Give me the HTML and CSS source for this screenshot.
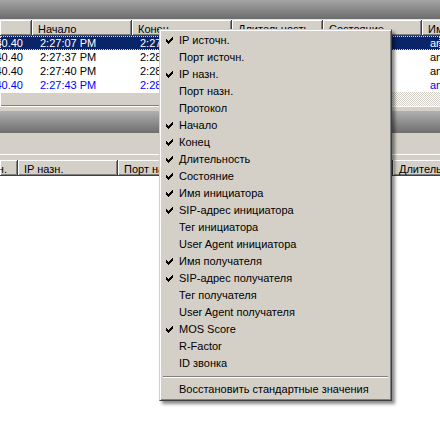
FILE: index.html
```html
<!DOCTYPE html>
<html>
<head>
<meta charset="utf-8">
<link rel="stylesheet" href="styles.css">
</head>
<body>
<div class="app">
  <div class="titlebar top"></div>
  <div class="header">
    <div class="hc w32"></div>
    <div class="hc w100">Начало</div>
    <div class="hc w100">Конец</div>
    <div class="hc w91">Длительность</div>
    <div class="hc w99">Состояние</div>
    <div class="hc w100">Имя инициатора</div>
  </div>
  <div class="rows">
    <div class="row sel">
      <div class="cell w32 clipl"><span>10.0.40.40</span></div>
      <div class="cell w100">2:27:07 PM</div>
      <div class="cell w100">2:27:52 PM</div>
      <div class="cell w91">00:00:45</div>
      <div class="cell w99">Завершён</div>
      <div class="cell w100">anonymous</div>
    </div>
    <div class="row">
      <div class="cell w32 clipl"><span>10.0.40.40</span></div>
      <div class="cell w100">2:27:37 PM</div>
      <div class="cell w100">2:28:02 PM</div>
      <div class="cell w91">00:00:25</div>
      <div class="cell w99">Завершён</div>
      <div class="cell w100">anonymous</div>
    </div>
    <div class="row">
      <div class="cell w32 clipl"><span>10.0.40.40</span></div>
      <div class="cell w100">2:27:40 PM</div>
      <div class="cell w100">2:28:10 PM</div>
      <div class="cell w91">00:00:30</div>
      <div class="cell w99">Завершён</div>
      <div class="cell w100">anonymous</div>
    </div>
    <div class="row blue">
      <div class="cell w32 clipl"><span>10.0.40.40</span></div>
      <div class="cell w100">2:27:43 PM</div>
      <div class="cell w100">2:28:15 PM</div>
      <div class="cell w91">00:00:32</div>
      <div class="cell w99">Активен</div>
      <div class="cell w100">anonymous</div>
    </div>
  </div>
  <div class="hscroll">
    <div class="thumb"></div>
    <div class="track"></div>
  </div>
  <div class="gap"></div>
  <div class="titlebar mid"></div>
  <div class="panel"></div>
  <div class="splitline"></div>
  <div class="panel2"></div>
  <div class="header lower">
    <div class="hc w18 clipl"><span>источн.</span></div>
    <div class="hc w100">IP назн.</div>
    <div class="hc w100">Порт назн.</div>
    <div class="hc w100">Протокол</div>
    <div class="hc w75">Начало</div>
    <div class="hc w100">Длительность</div>
  </div>
  <div class="list"></div>
</div>

<div class="menu">
  <div class="item"><span class="chk"><svg width="7" height="7" viewBox="0 0 7 7"><path d="M6 0h1v1h-1zM5 1h2v1h-2zM0 2h1v1h-1zM4 2h3v1h-3zM0 3h2v1h-2zM3 3h3v1h-3zM0 4h5v1h-5zM1 5h3v1h-3zM2 6h1v1h-1z"/></svg></span>IP источн.</div>
  <div class="item"><span class="chk"></span>Порт источн.</div>
  <div class="item"><span class="chk"><svg width="7" height="7" viewBox="0 0 7 7"><path d="M6 0h1v1h-1zM5 1h2v1h-2zM0 2h1v1h-1zM4 2h3v1h-3zM0 3h2v1h-2zM3 3h3v1h-3zM0 4h5v1h-5zM1 5h3v1h-3zM2 6h1v1h-1z"/></svg></span>IP назн.</div>
  <div class="item"><span class="chk"></span>Порт назн.</div>
  <div class="item"><span class="chk"></span>Протокол</div>
  <div class="item"><span class="chk"><svg width="7" height="7" viewBox="0 0 7 7"><path d="M6 0h1v1h-1zM5 1h2v1h-2zM0 2h1v1h-1zM4 2h3v1h-3zM0 3h2v1h-2zM3 3h3v1h-3zM0 4h5v1h-5zM1 5h3v1h-3zM2 6h1v1h-1z"/></svg></span>Начало</div>
  <div class="item"><span class="chk"><svg width="7" height="7" viewBox="0 0 7 7"><path d="M6 0h1v1h-1zM5 1h2v1h-2zM0 2h1v1h-1zM4 2h3v1h-3zM0 3h2v1h-2zM3 3h3v1h-3zM0 4h5v1h-5zM1 5h3v1h-3zM2 6h1v1h-1z"/></svg></span>Конец</div>
  <div class="item"><span class="chk"><svg width="7" height="7" viewBox="0 0 7 7"><path d="M6 0h1v1h-1zM5 1h2v1h-2zM0 2h1v1h-1zM4 2h3v1h-3zM0 3h2v1h-2zM3 3h3v1h-3zM0 4h5v1h-5zM1 5h3v1h-3zM2 6h1v1h-1z"/></svg></span>Длительность</div>
  <div class="item"><span class="chk"><svg width="7" height="7" viewBox="0 0 7 7"><path d="M6 0h1v1h-1zM5 1h2v1h-2zM0 2h1v1h-1zM4 2h3v1h-3zM0 3h2v1h-2zM3 3h3v1h-3zM0 4h5v1h-5zM1 5h3v1h-3zM2 6h1v1h-1z"/></svg></span>Состояние</div>
  <div class="item"><span class="chk"><svg width="7" height="7" viewBox="0 0 7 7"><path d="M6 0h1v1h-1zM5 1h2v1h-2zM0 2h1v1h-1zM4 2h3v1h-3zM0 3h2v1h-2zM3 3h3v1h-3zM0 4h5v1h-5zM1 5h3v1h-3zM2 6h1v1h-1z"/></svg></span>Имя инициатора</div>
  <div class="item"><span class="chk"><svg width="7" height="7" viewBox="0 0 7 7"><path d="M6 0h1v1h-1zM5 1h2v1h-2zM0 2h1v1h-1zM4 2h3v1h-3zM0 3h2v1h-2zM3 3h3v1h-3zM0 4h5v1h-5zM1 5h3v1h-3zM2 6h1v1h-1z"/></svg></span>SIP-адрес инициатора</div>
  <div class="item"><span class="chk"></span>Тег инициатора</div>
  <div class="item"><span class="chk"></span>User Agent инициатора</div>
  <div class="item"><span class="chk"><svg width="7" height="7" viewBox="0 0 7 7"><path d="M6 0h1v1h-1zM5 1h2v1h-2zM0 2h1v1h-1zM4 2h3v1h-3zM0 3h2v1h-2zM3 3h3v1h-3zM0 4h5v1h-5zM1 5h3v1h-3zM2 6h1v1h-1z"/></svg></span>Имя получателя</div>
  <div class="item"><span class="chk"><svg width="7" height="7" viewBox="0 0 7 7"><path d="M6 0h1v1h-1zM5 1h2v1h-2zM0 2h1v1h-1zM4 2h3v1h-3zM0 3h2v1h-2zM3 3h3v1h-3zM0 4h5v1h-5zM1 5h3v1h-3zM2 6h1v1h-1z"/></svg></span>SIP-адрес получателя</div>
  <div class="item"><span class="chk"></span>Тег получателя</div>
  <div class="item"><span class="chk"></span>User Agent получателя</div>
  <div class="item"><span class="chk"><svg width="7" height="7" viewBox="0 0 7 7"><path d="M6 0h1v1h-1zM5 1h2v1h-2zM0 2h1v1h-1zM4 2h3v1h-3zM0 3h2v1h-2zM3 3h3v1h-3zM0 4h5v1h-5zM1 5h3v1h-3zM2 6h1v1h-1z"/></svg></span>MOS Score</div>
  <div class="item"><span class="chk"></span>R-Factor</div>
  <div class="item"><span class="chk"></span>ID звонка</div>
  <div class="sep"></div>
  <div class="item"><span class="chk"></span>Восстановить стандартные значения</div>
</div>
</body>
</html>
```
FILE: styles.css
```css
html, body {
  margin: 0;
  padding: 0;
}
body {
  font-family: "Liberation Sans", Arial, sans-serif;
  font-size: 11px;
  color: #000;
  background: #fff;
  overflow: hidden;
}
.app {
  width: 440px;
  height: 435px;
  display: flex;
  flex-direction: column;
  overflow: hidden;
  background: #fff;
}
.titlebar {
  flex: none;
  background: linear-gradient(#a4a4a4, #6c6c6c);
}
.top {
  height: 19px;
  border-bottom: 1px solid #e4e1da;
}
.mid {
  height: 22px;
  background: linear-gradient(#b0b0b0, #6e6e6e);
}
.header {
  flex: none;
  display: flex;
  height: 16px;
  background: #d4d0c8;
  overflow: hidden;
}
.hc {
  flex: none;
  box-sizing: border-box;
  height: 16px;
  padding: 2px 0 0 6px;
  line-height: 14px;
  white-space: nowrap;
  overflow: hidden;
  background: #d4d0c8;
  border-right: 1px solid #404040;
  border-bottom: 1px solid #404040;
  box-shadow: inset 1px 1px #fff, inset -1px -1px #808080;
}
.lower .hc {
  padding-top: 2px;
}
.w18 { width: 18px; }
.w32 { width: 32px; }
.w75 { width: 75px; }
.w91 { width: 91px; }
.w99 { width: 99px; }
.w100 { width: 100px; }
.clipl {
  display: flex;
  justify-content: flex-end;
}
.clipl span {
  flex: none;
}
.hc.clipl {
  padding-left: 0;
  padding-right: 10px;
}
.rows {
  flex: none;
  display: flex;
  flex-direction: column;
}
.row {
  display: flex;
  height: 14px;
  line-height: 14px;
  white-space: nowrap;
  box-sizing: border-box;
}
.row.sel {
  background: #0a246a;
  color: #fff;
  outline: 1px dotted #e9dca6;
  outline-offset: -1px;
}
.row.blue {
  color: #0000ff;
}
.cell {
  flex: none;
  box-sizing: border-box;
  padding-left: 8px;
  overflow: hidden;
}
.cell.clipl {
  padding-left: 0;
  padding-right: 9px;
}
.hscroll {
  flex: none;
  display: flex;
  height: 14px;
}
.thumb {
  flex: none;
  width: 300px;
  background: #d4d0c8;
  box-shadow: inset 1px 1px #fff, inset -1px -1px #808080;
}
.track {
  flex: 1;
  background: repeating-conic-gradient(#ffffff 0 25%, #d4d0c8 0 50%) 0 0 / 2px 2px;
}
.gap {
  flex: none;
  height: 4px;
  background: #d4d0c8;
  border-top: 1px solid #fff;
}
.panel {
  flex: none;
  height: 21px;
  background: #d4d0c8;
}
.splitline {
  flex: none;
  height: 1px;
  background: #fff;
}
.panel2 {
  flex: none;
  height: 5px;
  background: #d4d0c8;
}
.list {
  flex: 1;
  background: #fff;
}
.menu {
  position: absolute;
  left: 159px;
  top: 29px;
  width: 233px;
  box-sizing: border-box;
  padding: 2px;
  background: #d4d0c8;
  border: 1px solid;
  border-color: #d4d0c8 #404040 #404040 #d4d0c8;
  box-shadow: inset 1px 1px #fff, inset -1px -1px #808080, 3px 3px 3px rgba(0, 0, 0, 0.45);
}
.item {
  display: flex;
  align-items: center;
  height: 17px;
  line-height: 17px;
  white-space: nowrap;
}
.chk {
  flex: none;
  width: 17px;
  height: 17px;
  display: flex;
  align-items: center;
}
.chk svg {
  display: block;
  margin-left: 4px;
  shape-rendering: crispEdges;
  fill: #000;
}
.sep {
  height: 9px;
  box-sizing: border-box;
  padding-top: 4px;
}
.sep::before {
  content: "";
  display: block;
  margin-left: 1px;
  margin-right: 1px;
  border-top: 1px solid #808080;
  border-bottom: 1px solid #fff;
}
```
